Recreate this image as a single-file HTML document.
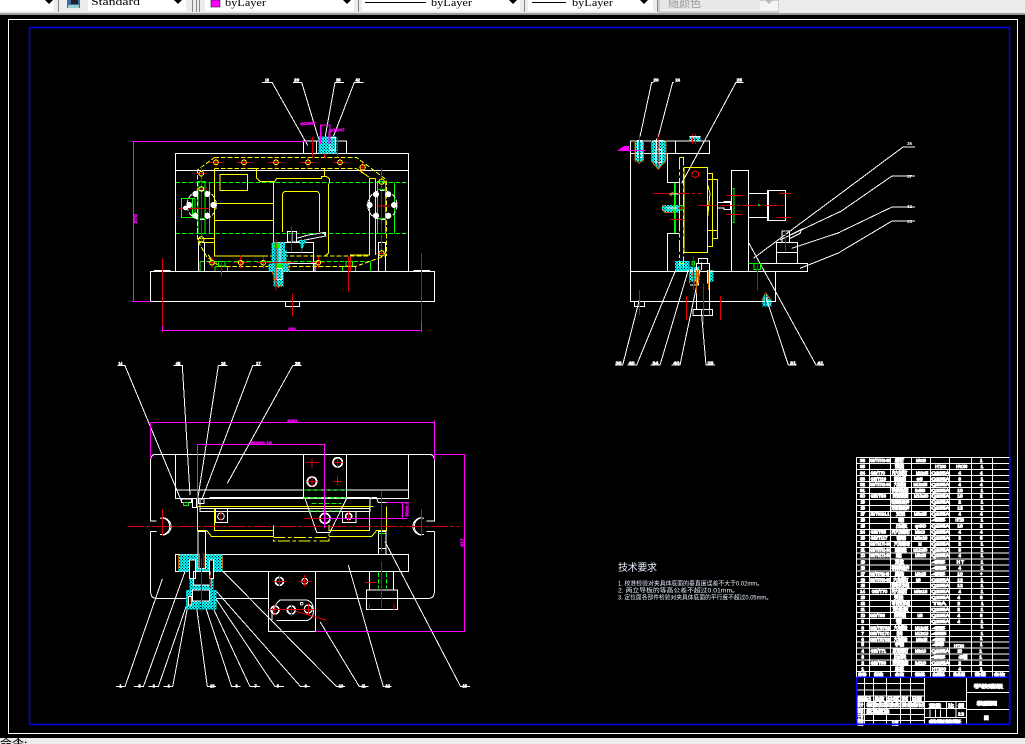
<!DOCTYPE html>
<html><head><meta charset="utf-8"><style>
html,body{margin:0;padding:0;background:#000;width:1025px;height:744px;overflow:hidden}
svg{position:absolute;left:0;top:0;display:block}
.d *{shape-rendering:crispEdges}
.d{fill:none;stroke-width:3}
.w{stroke:#fff}.y{stroke:#ff0}.g{stroke:#0f0}.r{stroke:#d00}.m{stroke:#f0f}.o{stroke:#c60}.b2{stroke:#00f}
.dash{stroke-dasharray:36 8 10 8}.sd{stroke-dasharray:14 6}
.lb text{font:bold 13px "Liberation Sans",sans-serif;fill:#fff;stroke:#fff;stroke-width:1.5}
.mt text{font:bold 14px "Liberation Sans",sans-serif;fill:#f0f;stroke:#f0f;stroke-width:1}
.t text{font:14px "Liberation Sans","Noto Sans CJK SC",sans-serif;fill:#fff;stroke:#fff;stroke-width:3}
.tb{font:10px "Liberation Serif","Noto Sans CJK SC",serif;fill:#000}
</style></head><body>
<svg width="1025" height="744" viewBox="0 0 1025 744" xmlns="http://www.w3.org/2000/svg">
<defs>
<pattern id="h" width="9" height="9" patternUnits="userSpaceOnUse"><rect width="9" height="9" fill="#0ff"/><rect x="0" y="0" width="3" height="3" fill="#000"/><rect x="4" y="4" width="3" height="3" fill="#000"/></pattern>
</defs>
<rect width="1025" height="744" fill="#000"/>

<!-- toolbar -->
<rect width="1025" height="13" fill="#ececec"/>
<rect y="13" width="1025" height="2" fill="#9a9a9a"/>
<g>
<rect x="0" y="0" width="54" height="11" fill="#fff"/><polygon points="45,0 53,0 49,4" fill="#000"/>
<rect x="58" y="0" width="1" height="12" fill="#888"/>
<rect x="67" y="0" width="13" height="8" fill="#3a6ea5"/><rect x="71" y="0" width="7" height="4" fill="#222"/><rect x="68" y="5" width="11" height="3" fill="#9cc"/>
<rect x="88" y="0" width="98" height="11" fill="#fff"/><polygon points="174,0 182,0 178,4" fill="#000"/>
<text class="tb" x="91" y="5" textLength="49" lengthAdjust="spacingAndGlyphs">Standard</text>
<rect x="192" y="0" width="1" height="12" fill="#888"/><rect x="196" y="0" width="1" height="12" fill="#888"/><rect x="199" y="0" width="1" height="12" fill="#888"/>
<rect x="205" y="0" width="149" height="11" fill="#fff"/><rect x="211" y="0" width="9" height="7" fill="#f0f" stroke="#000" stroke-width=".5"/>
<text class="tb" x="225" y="6" textLength="41" lengthAdjust="spacingAndGlyphs">byLayer</text><polygon points="343,0 351,0 347,4" fill="#000"/>
<rect x="358" y="0" width="1" height="12" fill="#888"/>
<rect x="362" y="0" width="158" height="11" fill="#fff"/><rect x="365" y="2" width="61" height="1" fill="#000"/>
<text class="tb" x="431" y="6" textLength="41" lengthAdjust="spacingAndGlyphs">byLayer</text><polygon points="509,0 517,0 513,4" fill="#000"/>
<rect x="524" y="0" width="1" height="12" fill="#888"/>
<rect x="528" y="0" width="125" height="11" fill="#fff"/><rect x="532" y="2" width="34" height="1" fill="#000"/>
<text class="tb" x="572" y="6" textLength="41" lengthAdjust="spacingAndGlyphs">byLayer</text><polygon points="640,0 648,0 644,4" fill="#000"/>
<rect x="657" y="0" width="1" height="12" fill="#888"/>
<rect x="659" y="0" width="120" height="12" fill="#f4f4f4" stroke="#aaa" stroke-width="1"/><rect x="660" y="0" width="100" height="10" fill="#e8e8e8"/>
<text x="668" y="7" font-size="11" fill="#999" font-family="'Noto Sans CJK SC',sans-serif">随颜色</text><polygon points="765,0 773,0 769,4" fill="#bbb"/>
<rect x="779" y="0" width="246" height="13" fill="#ececec"/>
</g>

<!-- drawing frames -->
<rect x="8.5" y="19.5" width="1009" height="714" fill="none" stroke="#fff" stroke-width="1"/>
<rect x="29.5" y="27.5" width="980" height="697" fill="none" stroke="#00f" stroke-width="1.4"/>

<!-- status bar -->
<rect y="738" width="1025" height="6" fill="#ececec"/>
<text x="0" y="748" font-size="12" fill="#000" font-family="'Noto Sans CJK SC',sans-serif">命令:</text>
<rect x="18" y="738" width="1" height="6" fill="#000"/>

<!-- VIEW 1 -->
<g class="d" transform="translate(120 70) scale(.33333)">
<g class="g sd">
<path d="M166 337H866M166 490H866M240 575H752"/>
</g>
<g class="g">
<path d="M234 335H255V490H234ZM240 352H252M240 445H252M268 337V490"/>
<path d="M773 335H797V490H773ZM776 358H795M776 445H795M823 337V490M748 337V490"/>
<path d="M184 385H225V443H184ZM218 385V443"/>
<path d="M240 575V605M752 575V605M285 590H323V605M285 590V605M667 590H707V605M667 590V605M295 575H315V588H295ZM678 575H698V588H678Z"/>
</g>
<g fill="none" class="w">
<path d="M166 250H866V605H166ZM166 301H866"/>
<path d="M91 604H944V694H91ZM496 694V710H539V694"/>
<path d="M550 250V213H680V250M590 213V250"/>
<path d="M236 604V517H254V604M775 604V517H797V604"/>
<path d="M102 601H152M880 601H930"/>
<path d="M502 484H530V516H502ZM516 484V516M460 517H580V604M500 548H580M500 580H585V604"/>
<path d="M530 505L565 495 610 488 617 498 565 508 530 516M607 488H617V498"/>
<path d="M426 37H456L563 226M519 37H545L600 220M672 37H645L612 220M731 37H703L640 200"/>
</g>
<g class="y">
<path d="M283 263H710L760 300 800 330V556L705 590H300L260 560 232 510V300Z" class="sd"/>
<path d="M283 296H710" class="sd"/>
<path d="M283 296V558H430" />
<path d="M430 558H745" class="sd"/>
<path d="M300 313H382V361H300ZM284 400H460M284 451H460"/>
<path d="M460 340V558M390 296H410V325L420 335H462M460 340L470 325H605V320H620L628 326V340M625 340V550L615 558"/>
<path d="M487 372L494 364H592L599 372V486M487 372V486" />
<path d="M748 325V555H690M767 325V555M748 325H767M710 296L748 322"/>
<path d="M254 517H284V558M265 555L275 570M232 505H284M614 296V318"/>
</g>
<g class="r">
<path d="M268 277H308M351 277H395M445 277H488M541 277H585M640 277H678"/>
<path d="M288 262V292M372 262V292M468 262V292M564 262V292M660 262V292"/>
<path d="M577 201V262M613 201V262M652 201V262"/>
<path d="M262 578H290M342 578H382M413 578H448M575 578H615"/>
<path d="M276 560V596M362 556V596M430 560V596M595 560V596M304 575V620M685 560V665M691 560V605"/>
<path d="M785 295V560M770 550H800M244 290V520M228 311H260M228 357H260M178 415H268M770 408H810"/>
<path d="M720 292H738M728 278V306M127 565V770M905 549V755M517 670V738M515 468V544M544 505V548"/>
</g>
<g class="y" stroke-width="3">
<circle cx="288" cy="277" r="7"/><circle cx="372" cy="277" r="7"/><circle cx="468" cy="277" r="7"/><circle cx="564" cy="277" r="7"/><circle cx="660" cy="277" r="7"/>
<circle cx="276" cy="578" r="7"/><circle cx="362" cy="578" r="7"/><circle cx="430" cy="578" r="7"/><circle cx="595" cy="578" r="7"/>
<circle cx="244" cy="311" r="7"/><circle cx="244" cy="357" r="7"/><circle cx="244" cy="508" r="8"/>
<circle cx="785" cy="335" r="8"/><circle cx="785" cy="550" r="8"/><circle cx="728" cy="292" r="8"/>
</g>
<g fill="#fff" stroke="none">
<circle cx="226" cy="372" r="9"/><circle cx="262" cy="372" r="9"/><circle cx="208" cy="405" r="9"/><circle cx="280" cy="405" r="9"/><circle cx="226" cy="437" r="9"/><circle cx="262" cy="437" r="9"/><circle cx="196" cy="414" r="7"/>
<circle cx="768" cy="373" r="9"/><circle cx="805" cy="373" r="9"/><circle cx="749" cy="405" r="9"/><circle cx="822" cy="405" r="9"/><circle cx="768" cy="437" r="9"/><circle cx="805" cy="437" r="9"/>
</g>
<circle cx="245" cy="405" r="44" class="w sd"/><circle cx="787" cy="405" r="44" class="w sd"/>
<!-- hatched -->
<g stroke="none" fill="url(#h)">
<rect x="455" y="517" width="40" height="64"/><rect x="480" y="540" width="20" height="40"/><rect x="445" y="580" width="63" height="25"/><rect x="461" y="605" width="30" height="45"/><rect x="595" y="200" width="55" height="50"/><path d="M535 510H558L546 540Z"/>
</g>
<path class="o" d="M457 605L467 640 476 652 488 640M495 565L508 600M497 580L505 572"/>
<path class="w" d="M470 595H486V628H470ZM470 525H480V585M630 203H646V240H630Z"/>
<path class="g" d="M462 522H478V532H462ZM470 582H486V592H470Z" fill="#0f0"/>
<path class="r" d="M468 507V662M412 577H522"/>
<g class="m">
<path d="M36 214H560M41 214V694M36 694H91"/>
<path d="M127 781H905M127 768V786M905 755V786"/>
<path d="M600 165H630V222M602 165V222M627 185V222" stroke-width="4"/>
</g>
<g class="mt">
<text x="30" y="465" transform="rotate(-90 38 452)" textLength="28" lengthAdjust="spacingAndGlyphs">370</text>
<text x="505" y="781" textLength="22" lengthAdjust="spacingAndGlyphs">630</text>
<text x="541" y="165" textLength="46" lengthAdjust="spacingAndGlyphs">φ20H7</text>
<text x="628" y="184" textLength="46" lengthAdjust="spacingAndGlyphs">φ12H7</text>
</g>
<g class="lb">
<text x="435" y="34" textLength="12" lengthAdjust="spacingAndGlyphs">18</text><text x="522" y="34" textLength="16" lengthAdjust="spacingAndGlyphs">20</text><text x="648" y="34" textLength="14" lengthAdjust="spacingAndGlyphs">35</text><text x="706" y="34" textLength="14" lengthAdjust="spacingAndGlyphs">42</text>
</g>
</g>

<!-- VIEW 2 -->
<g class="d" transform="translate(600 70) scale(.33333)">
<g stroke="none" fill="url(#h)">
<rect x="268" y="198" width="34" height="15"/><rect x="105" y="212" width="26" height="62"/><path d="M155 212H198V275L175 298 155 275Z"/>
<path d="M186 405H240V428H195L186 418Z"/><rect x="225" y="573" width="43" height="31"/><rect x="268" y="590" width="30" height="45"/><rect x="325" y="600" width="16" height="35"/>
<path d="M497 668L515 690V710H487V690Z"/>
</g>
<g class="w">
<path d="M91 604V213H329V250H91M226 213V250"/>
<path d="M202 250V337H238M202 604V490H238M225 337V490M238 352V470"/>
<path d="M91 604H527V694H91ZM394 604V301H446V604M446 370H502V442H446M502 361H557V452H502ZM506 361V452"/>
<path d="M446 580H623V604H527M529 580V517H593V580M529 547H593M546 517V483H568V517"/>
<path d="M103 694V710H133V694M290 604V580H328V718M290 640V718M279 718H338V737H279ZM295 580V565H322V580M305 718V737"/>
<path d="M353 398H372V394H392V418H372V414H353ZM372 398H392"/>
<path d="M170 205V238H184V278H168V238M162 212H190M112 212H126V262H112Z"/>
<path d="M546 483H568M570 495L605 478 600 490 570 505"/>
<path d="M270 600H295V645H270M305 578V600M322 600V640"/>
<path d="M160 37H155L120 200M222 37H218L175 200M430 37H408L245 340M720 372L460 565M720 425L540 510M720 487L575 535M720 547L600 595M45 885H68L118 690M82 885H110L225 605M152 885H180L265 600M215 885H240L300 600M345 885H318L305 735M590 885H565L497 680M672 885H648L447 520"/>
</g>
<g class="y">
<path d="M238 262H250V590M238 262V590" class="dash"/>
<path d="M252 292H322V548H252ZM322 310H338V530H322ZM322 328H352V505H338M322 482H352M338 328V480" />
<path d="M322 340L330 370 322 450M238 580H250"/>
</g>
<g class="o">
<path d="M155 212V275L175 298 198 270V212M105 212V270L118 280 131 268V212M186 410L196 405M186 418L196 428H230M268 590V640M290 600V670M295 600V640M325 600V660M208 372L225 365M205 370L215 378M275 605L285 640"/>
<path d="M486 690L497 668 512 690"/>
</g>
<g class="g">
<path d="M224 337V490M397 355H402V458H397M238 407H246V420H238ZM446 580H462M462 580H482V598H462ZM276 575H284V585H276ZM328 718V737"/>
</g>
<g class="r">
<path d="M160 370H303M210 448H252M295 406H555" stroke-dasharray="42 8 8 8"/>
<path d="M200 414H258M380 376H430M378 433H428M537 370H573M530 442H573M277 192V222M287 192V222M118 192V278M174 192V290"/>
<path d="M118 660V735M259 678V750M361 678V750M310 640V765M280 560V660M473 570V662M556 480V545M497 668V708"/>
</g>
<path d="M286 303L296 308V318L286 323 276 318V308Z" stroke="#e00"/>
<path d="M210 372H235M200 414H232" stroke="#fff" stroke-width="4"/>
<rect x="474" y="402" width="5" height="6" fill="#0f0" stroke="none"/>
<path class="m" d="M52 241H137"/>
<path d="M60 238L72 230H86V241H60Z" fill="#f0f" stroke="#f0f"/>
<rect x="268" y="198" width="34" height="5" fill="#fff" stroke="none"/>
<g class="lb">
<text x="160" y="35" textLength="16" lengthAdjust="spacingAndGlyphs">20</text><text x="226" y="35" textLength="14" lengthAdjust="spacingAndGlyphs">24</text><text x="410" y="35" textLength="16" lengthAdjust="spacingAndGlyphs">25</text>
<text x="47" y="884" textLength="18" lengthAdjust="spacingAndGlyphs">30</text><text x="86" y="884" textLength="18" lengthAdjust="spacingAndGlyphs">40</text><text x="157" y="884" textLength="18" lengthAdjust="spacingAndGlyphs">34</text><text x="220" y="884" textLength="18" lengthAdjust="spacingAndGlyphs">40</text><text x="322" y="884" textLength="18" lengthAdjust="spacingAndGlyphs">28</text><text x="570" y="884" textLength="18" lengthAdjust="spacingAndGlyphs">31</text><text x="652" y="884" textLength="18" lengthAdjust="spacingAndGlyphs">41</text>
</g>
</g>
<!-- leader ends, view 2 right labels -->
<g fill="none" stroke="#fff" stroke-width="1" shape-rendering="crispEdges">
<path d="M840 194L903 147H915M840 212L892 176H915M840 232L892 207H915M840 252L892 221H915" stroke-width="1"/>
</g>
<g font-family="Liberation Sans" font-size="4.5" font-weight="bold" fill="#fff"><text x="907" y="145">36</text><text x="907" y="178">37</text><text x="907" y="208">32</text><text x="907" y="223">33</text></g>

<!-- VIEW 3 -->
<g class="d" transform="translate(110 355) scale(.33333)">
<g class="w">
<path d="M122 498V315Q122 298 140 298H955Q973 298 973 315V498H950M122 498H140M122 530H140M950 530H973M122 530V710Q122 730 140 730H235M320 730H475M617 730H955Q973 730 973 710V530"/>
<path d="M196 298V430H896V298M196 405H896M580 298V430M710 298V430"/>
<path d="M196 598H896V650H196ZM475 650V830H617V650"/>
<path d="M778 650V705M850 650V705M769 705H862V763H769Z"/>
<path d="M270 430V470H780V428H298M784 428H800L805 443H830M270 460H780"/>
<path d="M585 430L620 532H660L710 430"/>
<path d="M486 795Q482 760 510 735H590Q610 740 610 765 612 790 590 797H500"/>
<path d="M316 460V503H352V460M697 470V503H738V470M264 530H286V598H264ZM805 530H828V598H805ZM805 580H828"/>
<path d="M157 488A25 25 0 0 1 157 540M150 490A22 22 0 0 1 178 514 22 22 0 0 1 150 538M935 488A25 25 0 0 0 935 540M942 490A22 22 0 0 0 914 514 22 22 0 0 0 942 538"/>
<circle cx="683" cy="322" r="14" stroke-width="5"/><circle cx="606" cy="380" r="14" stroke-width="5"/><circle cx="508" cy="679" r="12" stroke-width="5"/><circle cx="584" cy="679" r="9"/>
<circle cx="495" cy="765" r="12" stroke-width="5"/><circle cx="544" cy="765" r="12" stroke-width="5"/><circle cx="595" cy="762" r="12" stroke-width="4"/><circle cx="575" cy="746" r="4"/>
<circle cx="645" cy="490" r="15" stroke-width="5"/><circle cx="333" cy="484" r="10"/><circle cx="716" cy="484" r="9" stroke-width="5"/>
<path d="M215 432H245V442H215ZM247 430H260V458H247ZM265 430H282V445H265Z"/>
<path d="M22 32H45L215 440M190 32H217L240 420M352 32H325L262 440M455 32H428L275 435M575 32H548L352 385"/>
<path d="M18 995H45L157 672M72 995H100L225 650M115 995H145L230 750M160 995H188L232 760M318 995H292L258 745M392 995H365L278 730M450 995H420L305 750M522 995H495L310 720M600 995H572L320 710M705 995H680L335 645M775 995H748L630 800M845 995H820L715 630M1080 995H1052L825 560"/>
</g>
<g class="y">
<path d="M262 455H790M262 455V526H290L305 545H490M830 455V526H800L785 545H657"/>
<path d="M314 462V526H490V510M778 458V526H657V510" />
<path d="M490 510V558H657V535M490 548H655" class="dash"/>
<path d="M352 526H490M657 526H778" class="sd"/>
</g>
<g class="g">
<path d="M580 405H710M595 468H695M605 445H695" class="sd"/>
<path d="M580 428H710" class="sd" stroke-width="5"/>
<path d="M805 652V700M830 652V700" class="sd"/>
<path d="M220 442H235V452H220ZM266 535H285M806 535H826M243 608H256M298 608H310"/>
<rect x="232" y="755" width="14" height="6" fill="#0f0"/>
</g>
<g stroke="none" fill="url(#h)">
<path d="M205 598H338V650H310V695H238V650H205Z"/>
<path d="M228 705H238V695H310V705H320V763H228Z"/>
</g>
<g class="w">
<path d="M264 530H286V640H264ZM238 615H256V670H238ZM298 615H310V670H298ZM250 650H300V690H250ZM248 705H298V738H248ZM235 725H245V750H235Z" fill="#000"/>
</g>
<g class="o">
<path d="M268 595V640M282 595V640M205 600V640M338 605V640M232 728V748M243 728V748M268 740V760M310 710V760"/>
</g>
<g class="r">
<path d="M52 514H1047" stroke-dasharray="50 8 10 8"/>
<path d="M157 462V540M935 462V540M606 310V338M590 322H628M683 362V390M670 380H696M683 310V338M670 322H698M606 365V395M592 380H620"/>
<path d="M508 660V695M490 679H530M584 660V695M565 679H604"/>
<path d="M475 763H617M555 768L650 796M495 748V782M544 748V785M595 745V780"/>
<path d="M645 470V510M580 490H665M716 470V500M333 470V500M815 408V590M815 620V760M765 682H800M274 610V770M300 660V700M852 745V765M778 745V765"/>
</g>
<g class="m">
<path d="M122 203H973M122 203V310M973 197V315"/>
<path d="M263 268H643M263 268V455M643 265V520"/>
<path d="M973 298H1063V829H617M830 442H893M640 490H893M877 442V490"/>
</g>
<g class="mt">
<text x="532" y="203" textLength="30" lengthAdjust="spacingAndGlyphs">630</text>
<text x="420" y="268" textLength="66" lengthAdjust="spacingAndGlyphs">380±0.15</text>
<text x="1040" y="570" transform="rotate(-90 1053 563)" textLength="26" lengthAdjust="spacingAndGlyphs">417</text>
<text x="865" y="478" transform="rotate(-90 884 466)" textLength="44" lengthAdjust="spacingAndGlyphs">50±0.1</text>
</g>
<g class="lb">
<text x="25" y="30" textLength="12" lengthAdjust="spacingAndGlyphs">14</text><text x="197" y="30" textLength="14" lengthAdjust="spacingAndGlyphs">45</text><text x="333" y="30" textLength="14" lengthAdjust="spacingAndGlyphs">16</text><text x="438" y="30" textLength="14" lengthAdjust="spacingAndGlyphs">17</text><text x="555" y="30" textLength="16" lengthAdjust="spacingAndGlyphs">38</text>
<text x="28" y="997" textLength="6">1</text><text x="85" y="997" textLength="10">5</text><text x="128" y="997" textLength="10">3</text><text x="172" y="997" textLength="10">4</text><text x="300" y="997" textLength="14">18</text><text x="376" y="997" textLength="10">6</text><text x="433" y="997" textLength="8">7</text><text x="500" y="997" textLength="10">8</text><text x="584" y="997" textLength="10">9</text><text x="686" y="997" textLength="14">10</text><text x="755" y="997" textLength="12">11</text><text x="826" y="997" textLength="14">12</text><text x="1057" y="997" textLength="14">15</text>
</g>
</g>

<!-- tech requirements -->
<g font-family="'Liberation Sans','Noto Sans CJK SC',sans-serif" fill="#e8f0ff">
<text x="618" y="571" font-size="10" textLength="39">技术要求</text>
<text x="618" y="585.5" font-size="6" textLength="145" lengthAdjust="spacingAndGlyphs">1. 校准检验对夹具体底面的垂直度误差不大于0.02mm。</text>
<text x="618" y="592.5" font-size="6" textLength="121" lengthAdjust="spacingAndGlyphs">2. 两立导板的等高公差不超过0.01mm。</text>
<text x="618" y="599.5" font-size="6" textLength="154" lengthAdjust="spacingAndGlyphs">3. 定位面各部件检验对夹具体底面的平行度不超过0.05mm。</text>
</g>

<!-- parts table -->
<g class="d" transform="translate(850 450) scale(.33333)">
<g class="w">
<path d="M19 22V682M58 22V682M122 22V682M185 22V682M242 22V682M298 22V682M365 22V682M428 22V682"/>
<path d="M19 22H480M19 40H480M19 58H480M19 77H480M19 95H480M19 112H480M19 130H480M19 148H480M19 166H480M19 184H480M19 202H480M19 220H480M19 238H480M19 256H480M19 274H480M19 292H480M19 309H480M19 327H480M19 345H480M19 363H480M19 380H480M19 398H480M19 416H480M19 434H480M19 452H480M19 470H480M19 488H480M19 506H480M19 524H480M19 542H480M19 560H480M19 576H480M19 594H480M19 612H480M19 630H480M19 647H480M19 665H480"/>
<!-- title block grid -->
<path d="M44 682V823M70 682V823M110 682V823M152 682V823M182 682V823M224 682V823M350 682V823"/>
<path d="M19 700H224M19 720H224M19 738H224M19 755H350M19 775H350M19 793H224M19 812H224M224 803H350M350 727H480M350 778H480"/>
<path d="M289 755V803M318 755V803M240 778V803M256 778V803M272 778V803"/>
</g>
<g class="t">
<!-- column 2 -->
<text x="60" y="36" textLength="60" lengthAdjust="spacingAndGlyphs">GB/T5783-86</text><text x="62" y="73" textLength="43" lengthAdjust="spacingAndGlyphs">GB/T70</text><text x="62" y="91" textLength="46" lengthAdjust="spacingAndGlyphs">GB/T119</text><text x="60" y="108" textLength="60" lengthAdjust="spacingAndGlyphs">GB/T5782-86</text><text x="62" y="143" textLength="46" lengthAdjust="spacingAndGlyphs">GB/T93</text><text x="60" y="197" textLength="58" lengthAdjust="spacingAndGlyphs">JB/T8024.1</text><text x="62" y="251" textLength="46" lengthAdjust="spacingAndGlyphs">GB/T95</text><text x="62" y="269" textLength="50" lengthAdjust="spacingAndGlyphs">GB/T117</text><text x="60" y="287" textLength="60" lengthAdjust="spacingAndGlyphs">GB/T6170-86</text><text x="60" y="305" textLength="60" lengthAdjust="spacingAndGlyphs">GB/T5781-86</text><text x="60" y="321" textLength="60" lengthAdjust="spacingAndGlyphs">GB/T6172-86</text><text x="60" y="376" textLength="58" lengthAdjust="spacingAndGlyphs">GB/T5782-85</text><text x="60" y="394" textLength="60" lengthAdjust="spacingAndGlyphs">GB/T5783-85</text><text x="65" y="429" textLength="47" lengthAdjust="spacingAndGlyphs">GB/T70</text><text x="60" y="501" textLength="45" lengthAdjust="spacingAndGlyphs">GB/T93</text><text x="60" y="538" textLength="60" lengthAdjust="spacingAndGlyphs">GB/T5782</text><text x="60" y="555" textLength="58" lengthAdjust="spacingAndGlyphs">GB/T6170</text><text x="60" y="573" textLength="60" lengthAdjust="spacingAndGlyphs">GB/T5783</text><text x="62" y="607" textLength="46" lengthAdjust="spacingAndGlyphs">GB/T71</text><text x="62" y="643" textLength="46" lengthAdjust="spacingAndGlyphs">GB/T93</text>
<!-- column 3 -->
<text x="135" y="36" textLength="27" lengthAdjust="spacingAndGlyphs">螺钉</text><text x="135" y="54" textLength="27" lengthAdjust="spacingAndGlyphs">垫圈</text><text x="126" y="73" textLength="46" lengthAdjust="spacingAndGlyphs">内六角螺钉</text><text x="132" y="91" textLength="36" lengthAdjust="spacingAndGlyphs">圆柱销</text><text x="132" y="108" textLength="36" lengthAdjust="spacingAndGlyphs">六角螺栓</text><text x="125" y="126" textLength="50" lengthAdjust="spacingAndGlyphs">快换钻套</text><text x="128" y="143" textLength="47" lengthAdjust="spacingAndGlyphs">弹簧垫圈</text><text x="124" y="161" textLength="54" lengthAdjust="spacingAndGlyphs">钻模板组件</text><text x="124" y="179" textLength="54" lengthAdjust="spacingAndGlyphs">定位销组件</text><text x="138" y="197" textLength="27" lengthAdjust="spacingAndGlyphs">支架</text><text x="145" y="215" textLength="17" lengthAdjust="spacingAndGlyphs">轴</text><text x="138" y="233" textLength="34" lengthAdjust="spacingAndGlyphs">压板</text><text x="125" y="251" textLength="55" lengthAdjust="spacingAndGlyphs">内六角螺钉</text><text x="140" y="269" textLength="28" lengthAdjust="spacingAndGlyphs">锥销</text><text x="132" y="287" textLength="48" lengthAdjust="spacingAndGlyphs">六角螺母</text><text x="135" y="305" textLength="35" lengthAdjust="spacingAndGlyphs">螺栓</text><text x="138" y="321" textLength="17" lengthAdjust="spacingAndGlyphs">螺</text><text x="135" y="340" textLength="27" lengthAdjust="spacingAndGlyphs">定位</text><text x="124" y="359" textLength="54" lengthAdjust="spacingAndGlyphs">导向块组件</text><text x="135" y="376" textLength="27" lengthAdjust="spacingAndGlyphs">螺栓</text><text x="130" y="394" textLength="45" lengthAdjust="spacingAndGlyphs">六角螺钉</text><text x="124" y="411" textLength="54" lengthAdjust="spacingAndGlyphs">滑动支承组</text><text x="125" y="429" textLength="47" lengthAdjust="spacingAndGlyphs">内六角螺钉</text><text x="132" y="447" textLength="28" lengthAdjust="spacingAndGlyphs">支柱</text><text x="125" y="465" textLength="55" lengthAdjust="spacingAndGlyphs">可调支承组</text><text x="128" y="483" textLength="47" lengthAdjust="spacingAndGlyphs">定位板</text><text x="132" y="501" textLength="36" lengthAdjust="spacingAndGlyphs">弹簧垫圈</text><text x="138" y="519" textLength="17" lengthAdjust="spacingAndGlyphs">销</text><text x="132" y="538" textLength="40" lengthAdjust="spacingAndGlyphs">六角螺栓</text><text x="140" y="555" textLength="18" lengthAdjust="spacingAndGlyphs">螺母</text><text x="132" y="573" textLength="40" lengthAdjust="spacingAndGlyphs">六角螺栓</text><text x="135" y="588" textLength="27" lengthAdjust="spacingAndGlyphs">手柄</text><text x="128" y="607" textLength="47" lengthAdjust="spacingAndGlyphs">紧定螺钉</text><text x="132" y="626" textLength="36" lengthAdjust="spacingAndGlyphs">压块</text><text x="128" y="643" textLength="47" lengthAdjust="spacingAndGlyphs">弹簧垫圈</text><text x="135" y="661" textLength="27" lengthAdjust="spacingAndGlyphs">底板</text>
<!-- column 4 -->
<text x="198" y="36" textLength="30" lengthAdjust="spacingAndGlyphs">M6x20</text><text x="198" y="73" textLength="37" lengthAdjust="spacingAndGlyphs">M10x35</text><text x="200" y="91" textLength="18" lengthAdjust="spacingAndGlyphs">φ8</text><text x="190" y="108" textLength="42" lengthAdjust="spacingAndGlyphs">M12x35</text><text x="195" y="126" textLength="30" lengthAdjust="spacingAndGlyphs">M8</text><text x="192" y="143" textLength="43" lengthAdjust="spacingAndGlyphs">M10x30</text><text x="192" y="197" textLength="38" lengthAdjust="spacingAndGlyphs">M8x25</text><text x="195" y="233" textLength="33" lengthAdjust="spacingAndGlyphs">φ30</text><text x="195" y="251" textLength="30" lengthAdjust="spacingAndGlyphs">M6x16</text><text x="192" y="269" textLength="40" lengthAdjust="spacingAndGlyphs">M8x20</text><text x="205" y="287" textLength="10" lengthAdjust="spacingAndGlyphs">M</text><text x="190" y="305" textLength="42" lengthAdjust="spacingAndGlyphs">M12x50</text><text x="195" y="321" textLength="33" lengthAdjust="spacingAndGlyphs">M8x30</text><text x="195" y="376" textLength="33" lengthAdjust="spacingAndGlyphs">M6x25</text><text x="198" y="394" textLength="14" lengthAdjust="spacingAndGlyphs">M8</text><text x="192" y="429" textLength="40" lengthAdjust="spacingAndGlyphs">M8x16</text><text x="202" y="501" textLength="16" lengthAdjust="spacingAndGlyphs">M8</text><text x="195" y="538" textLength="40" lengthAdjust="spacingAndGlyphs">M12x25</text><text x="195" y="555" textLength="40" lengthAdjust="spacingAndGlyphs">M12x16</text><text x="198" y="573" textLength="34" lengthAdjust="spacingAndGlyphs">M6x25</text><text x="195" y="607" textLength="33" lengthAdjust="spacingAndGlyphs">M8x10</text><text x="195" y="643" textLength="33" lengthAdjust="spacingAndGlyphs">M10</text>
</g>
<!-- column 5 materials: bars of stroked text -->
<g class="t" style="font-size:18px">
<text x="255" y="54" textLength="33" lengthAdjust="spacingAndGlyphs">HT200</text><text x="244" y="73" textLength="54" lengthAdjust="spacingAndGlyphs">Q235A</text><text x="244" y="91" textLength="54" lengthAdjust="spacingAndGlyphs">Q235A</text><text x="244" y="108" textLength="54" lengthAdjust="spacingAndGlyphs">Q235A</text><text x="244" y="126" textLength="54" lengthAdjust="spacingAndGlyphs">Q235A</text><text x="244" y="143" textLength="54" lengthAdjust="spacingAndGlyphs">Q235A</text><text x="244" y="161" textLength="54" lengthAdjust="spacingAndGlyphs">Q235A</text><text x="244" y="179" textLength="54" lengthAdjust="spacingAndGlyphs">Q235A</text><text x="244" y="197" textLength="54" lengthAdjust="spacingAndGlyphs">Q235A</text><text x="246" y="215" textLength="39" lengthAdjust="spacingAndGlyphs">45</text><text x="244" y="233" textLength="54" lengthAdjust="spacingAndGlyphs">Q235A</text><text x="244" y="251" textLength="54" lengthAdjust="spacingAndGlyphs">Q235A</text><text x="244" y="269" textLength="54" lengthAdjust="spacingAndGlyphs">Q235A</text><text x="244" y="287" textLength="54" lengthAdjust="spacingAndGlyphs">Q235A</text><text x="244" y="305" textLength="54" lengthAdjust="spacingAndGlyphs">Q235A</text><text x="244" y="321" textLength="54" lengthAdjust="spacingAndGlyphs">Q235A</text><text x="246" y="340" textLength="39" lengthAdjust="spacingAndGlyphs">45</text><text x="246" y="359" textLength="42" lengthAdjust="spacingAndGlyphs">45</text><text x="246" y="376" textLength="39" lengthAdjust="spacingAndGlyphs">45</text><text x="244" y="394" textLength="54" lengthAdjust="spacingAndGlyphs">Q235A</text><text x="244" y="411" textLength="54" lengthAdjust="spacingAndGlyphs">Q235A</text><text x="244" y="429" textLength="54" lengthAdjust="spacingAndGlyphs">Q235A</text><text x="244" y="447" textLength="54" lengthAdjust="spacingAndGlyphs">Q235A</text><text x="248" y="465" textLength="40" lengthAdjust="spacingAndGlyphs">T8A</text><text x="244" y="483" textLength="54" lengthAdjust="spacingAndGlyphs">Q235A</text><text x="244" y="501" textLength="54" lengthAdjust="spacingAndGlyphs">Q235A</text><text x="244" y="519" textLength="54" lengthAdjust="spacingAndGlyphs">Q235A</text><text x="248" y="538" textLength="37" lengthAdjust="spacingAndGlyphs">45</text><text x="246" y="555" textLength="42" lengthAdjust="spacingAndGlyphs">45</text><text x="248" y="573" textLength="37" lengthAdjust="spacingAndGlyphs">45</text><text x="248" y="588" textLength="34" lengthAdjust="spacingAndGlyphs">45</text><text x="244" y="607" textLength="54" lengthAdjust="spacingAndGlyphs">Q235A</text><text x="243" y="626" textLength="42" lengthAdjust="spacingAndGlyphs">45</text><text x="244" y="643" textLength="54" lengthAdjust="spacingAndGlyphs">Q235A</text><text x="246" y="661" textLength="42" lengthAdjust="spacingAndGlyphs">HT200</text>
</g>
<!-- column 1, 6, 7 -->
<g class="t" style="stroke-width:2">
<text x="30" y="36" textLength="15">36</text><text x="30" y="54" textLength="15">35</text><text x="30" y="73" textLength="15">34</text><text x="30" y="91" textLength="15">33</text><text x="30" y="108" textLength="15">32</text><text x="30" y="126" textLength="15">31</text><text x="30" y="143" textLength="15">30</text><text x="32" y="161" textLength="13">29</text><text x="32" y="179" textLength="13">28</text><text x="32" y="197" textLength="13">27</text><text x="32" y="215" textLength="13">26</text><text x="32" y="233" textLength="13">25</text><text x="30" y="251" textLength="15">24</text><text x="32" y="269" textLength="13">23</text><text x="32" y="287" textLength="13">22</text><text x="32" y="305" textLength="13">21</text><text x="32" y="321" textLength="13">20</text><text x="32" y="340" textLength="13">19</text><text x="32" y="359" textLength="13">18</text><text x="32" y="376" textLength="13">17</text><text x="32" y="394" textLength="13">16</text><text x="32" y="411" textLength="13">15</text><text x="30" y="429" textLength="15">14</text><text x="32" y="447" textLength="13">13</text><text x="32" y="465" textLength="13">12</text><text x="32" y="483" textLength="13">11</text><text x="32" y="501" textLength="13">10</text><text x="34" y="519" textLength="8">9</text><text x="34" y="538" textLength="8">8</text><text x="34" y="555" textLength="8">7</text><text x="34" y="573" textLength="8">6</text><text x="34" y="588" textLength="8">5</text><text x="34" y="607" textLength="8">4</text><text x="34" y="626" textLength="8">3</text><text x="34" y="643" textLength="8">2</text><text x="34" y="661" textLength="8">1</text>
<text x="318" y="54" textLength="34" lengthAdjust="spacingAndGlyphs">HRC58</text><text x="325" y="73" textLength="13">4</text><text x="325" y="91" textLength="13">6</text><text x="325" y="108" textLength="13">4</text><text x="322" y="126" textLength="16">10</text><text x="322" y="143" textLength="16">10</text><text x="325" y="161" textLength="13">2</text><text x="322" y="179" textLength="16">12</text><text x="325" y="197" textLength="13">4</text><text x="316" y="215" textLength="26" lengthAdjust="spacingAndGlyphs">HT20</text><text x="322" y="233" textLength="16">10</text><text x="325" y="251" textLength="13">4</text><text x="325" y="269" textLength="13">2</text><text x="325" y="287" textLength="13">2</text><text x="325" y="305" textLength="13">8</text><text x="325" y="321" textLength="13">4</text><text x="320" y="340" textLength="22">HT</text><text x="325" y="359" textLength="13">4</text><text x="322" y="376" textLength="16">10</text><text x="322" y="394" textLength="16">12</text><text x="322" y="411" textLength="16">12</text><text x="325" y="429" textLength="13">4</text><text x="322" y="447" textLength="14">4</text><text x="322" y="465" textLength="14">2</text><text x="322" y="483" textLength="12">2</text><text x="322" y="501" textLength="14">4</text><text x="322" y="519" textLength="14">4</text>
<text x="312" y="593" textLength="30" lengthAdjust="spacingAndGlyphs">HT20</text><text x="322" y="607" textLength="14">10</text><text x="325" y="626" textLength="27" lengthAdjust="spacingAndGlyphs">45钢</text><text x="325" y="643" textLength="13">2</text><text x="325" y="661" textLength="13">4</text>
<text x="390" y="36" textLength="6">1</text><text x="392" y="54" textLength="3">1</text><text x="390" y="73" textLength="9">4</text><text x="392" y="91" textLength="6">1</text><text x="390" y="108" textLength="9">4</text><text x="392" y="126" textLength="6">1</text><text x="390" y="143" textLength="9">2</text><text x="392" y="161" textLength="6">1</text><text x="392" y="179" textLength="3">1</text><text x="390" y="197" textLength="9">4</text><text x="392" y="215" textLength="6">1</text><text x="390" y="233" textLength="9">2</text><text x="390" y="251" textLength="9">4</text><text x="390" y="269" textLength="9">8</text><text x="392" y="287" textLength="3">1</text><text x="392" y="305" textLength="3">1</text><text x="392" y="321" textLength="3">1</text><text x="392" y="340" textLength="3">1</text><text x="392" y="359" textLength="3">1</text><text x="390" y="376" textLength="9">+</text><text x="392" y="394" textLength="6">1</text><text x="392" y="411" textLength="6">1</text><text x="392" y="429" textLength="6">1</text><text x="390" y="447" textLength="9">8</text><text x="393" y="465" textLength="3">1</text><text x="392" y="483" textLength="6">1</text><text x="390" y="501" textLength="9">8</text><text x="392" y="519" textLength="6">1</text><text x="392" y="534" textLength="6">1</text><text x="392" y="555" textLength="6">1</text><text x="390" y="570" textLength="9">1</text><text x="390" y="588" textLength="9">1</text><text x="388" y="607" textLength="13">1</text><text x="388" y="626" textLength="9">1</text><text x="388" y="643" textLength="9">2</text><text x="390" y="661" textLength="9">1</text>
</g>
<g class="t" style="font-size:20px">
<!-- header row -->
<text x="24" y="680" textLength="26" lengthAdjust="spacingAndGlyphs">序号</text><text x="72" y="680" textLength="28" lengthAdjust="spacingAndGlyphs">标准</text><text x="135" y="680" textLength="27" lengthAdjust="spacingAndGlyphs">名称</text><text x="195" y="680" textLength="30" lengthAdjust="spacingAndGlyphs">规格</text><text x="248" y="680" textLength="37" lengthAdjust="spacingAndGlyphs">材料</text><text x="310" y="680" textLength="35" lengthAdjust="spacingAndGlyphs">热处理</text><text x="375" y="680" textLength="33" lengthAdjust="spacingAndGlyphs">数量</text><text x="432" y="680" textLength="33" lengthAdjust="spacingAndGlyphs">备注</text>
<!-- title block -->
<text x="22" y="752" textLength="41" lengthAdjust="spacingAndGlyphs">标记</text><text x="74" y="752" textLength="29" lengthAdjust="spacingAndGlyphs">处数</text><text x="110" y="752" textLength="40" lengthAdjust="spacingAndGlyphs">分区</text><text x="155" y="752" textLength="20" lengthAdjust="spacingAndGlyphs">签名</text><text x="185" y="752" textLength="30" lengthAdjust="spacingAndGlyphs">日期</text>
<text x="22" y="770" textLength="18" lengthAdjust="spacingAndGlyphs">设计</text><text x="50" y="770" textLength="100" lengthAdjust="spacingAndGlyphs">标准化标准化</text><text x="155" y="770" textLength="67" lengthAdjust="spacingAndGlyphs">阶段标记</text>
<text x="22" y="789" textLength="18" lengthAdjust="spacingAndGlyphs">审核</text><text x="50" y="789" textLength="68" lengthAdjust="spacingAndGlyphs">批准批准</text>
<text x="22" y="808" textLength="18" lengthAdjust="spacingAndGlyphs">工艺</text><text x="22" y="825" textLength="18" lengthAdjust="spacingAndGlyphs">日期</text><text x="125" y="825" textLength="20" lengthAdjust="spacingAndGlyphs">日期</text>
<text x="237" y="773" textLength="36" lengthAdjust="spacingAndGlyphs">重量</text><text x="294" y="773" textLength="18" lengthAdjust="spacingAndGlyphs">比</text><text x="324" y="773" textLength="18" lengthAdjust="spacingAndGlyphs">例</text><text x="324" y="797" textLength="18" lengthAdjust="spacingAndGlyphs">1:2</text><text x="237" y="820" textLength="96" lengthAdjust="spacingAndGlyphs">共张第张</text>
</g>
<g class="t" style="font-size:22px;stroke-width:5">
<text x="372" y="714" textLength="87" lengthAdjust="spacingAndGlyphs">学校班级</text><text x="381" y="765" textLength="60" lengthAdjust="spacingAndGlyphs">装配图</text><text x="402" y="809" textLength="14" lengthAdjust="spacingAndGlyphs">图</text>
</g>
<path class="b2" d="M19 823H480M19 682H480M20 682V823M479 22V823" stroke-width="4"/>
</g>
</svg>
</body></html>
